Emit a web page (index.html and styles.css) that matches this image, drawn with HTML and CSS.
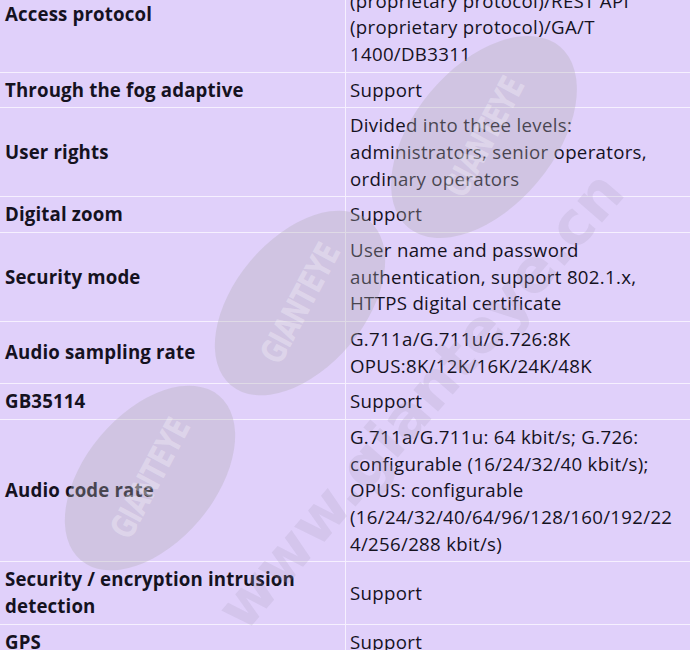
FILE: index.html
```html
<!DOCTYPE html>
<html>
<head>
<meta charset="utf-8">
<link rel="stylesheet" href="styles.css">
</head>
<body>
<div class="page">
<table class="spec">
<tr><th>Access protocol</th><td>GB/T 28181/ONVIF/Ehome/ISAPI/SDK (proprietary protocol)/REST API (proprietary protocol)/GA/T 1400/DB3311</td></tr>
<tr><th>Through the fog adaptive</th><td>Support</td></tr>
<tr><th>User rights</th><td>Divided into three levels: administrators, senior operators, ordinary operators</td></tr>
<tr><th>Digital zoom</th><td>Support</td></tr>
<tr><th>Security mode</th><td>User name and password authentication, support 802.1.x, HTTPS digital certificate</td></tr>
<tr><th>Audio sampling rate</th><td>G.711a/G.711u/G.726:8K OPUS:8K/12K/16K/24K/48K</td></tr>
<tr><th>GB35114</th><td>Support</td></tr>
<tr><th>Audio code rate</th><td>G.711a/G.711u: 64 kbit/s; G.726: configurable (16/24/32/40 kbit/s); OPUS: configurable <span class="token">(16/24/32/40/64/96/128/160/192/224/256/288 kbit/s)</span></td></tr>
<tr><th>Security / encryption intrusion detection</th><td>Support</td></tr>
<tr><th>GPS</th><td>Support</td></tr>
</table>
<div class="wm" aria-hidden="true">
  <div class="blob b1"><span>GIANTEYE</span></div>
  <div class="blob b2"><span>GIANTEYE</span></div>
  <div class="blob b3"><span>GIANTEYE</span></div>
  <div class="url">www.gianteye.cn</div>
</div>
</div>
</body>
</html>
```
FILE: styles.css
```css
html, body {
  margin: 0;
  padding: 0;
  background: #e0d0fa;
}
.page {
  position: relative;
  width: 690px;
  height: 650px;
  overflow: hidden;
}
.spec {
  margin-top: -43px;
  width: 690px;
  border-collapse: collapse;
  table-layout: fixed;
  font-family: "Open Sans", "Noto Sans", sans-serif;
  font-size: 18.67px;
  line-height: 26.67px;
  color: #15121f;
}
.spec th, .spec td {
  border: 1px solid #f6f0ff;
  padding: 4px 5px 4px 5px;
  vertical-align: middle;
  text-align: left;
  overflow-wrap: break-word;
}
.spec tr:first-child th, .spec tr:first-child td { border-top: none; }
.spec th {
  width: 335px;
  font-weight: bold;
  letter-spacing: 0.15px;
  border-left: none;
}
.spec td {
  padding-left: 4px;
  letter-spacing: 0.3px;
  border-right: none;
}
.token {
  display: inline-block;
  width: 100%;
  word-break: break-all;
}
.wm {
  position: absolute;
  left: 0;
  top: 0;
  width: 690px;
  height: 650px;
  pointer-events: none;
}
.blob {
  position: absolute;
  border-radius: 50%;
  background: rgba(175, 172, 180, 0.33);
  display: flex;
  align-items: center;
  justify-content: center;
  transform: translate(-50%, -50%) rotate(-50deg);
}
.blob span {
  font-family: "DejaVu Sans Condensed", "DejaVu Sans", sans-serif;
  font-weight: bold;
  font-size: 34px;
  letter-spacing: -1px;
  color: rgba(255, 255, 255, 0.3);
  transform: rotate(-12deg) scaleX(0.8);
}
.b1 { left: 484px; top: 137px; width: 236px; height: 140px; }
.b2 { left: 300px; top: 303px; width: 215px; height: 130px; }
.b3 { left: 150px; top: 478px; width: 215px; height: 130px; }
.url {
  position: absolute;
  left: 420px;
  top: 400px;
  transform: translate(-50%, -50%) rotate(-49deg);
  font-family: "DejaVu Sans", sans-serif;
  font-weight: bold;
  font-size: 60px;
  letter-spacing: 0px;
  white-space: nowrap;
  color: rgba(170, 160, 185, 0.22);
}
```
